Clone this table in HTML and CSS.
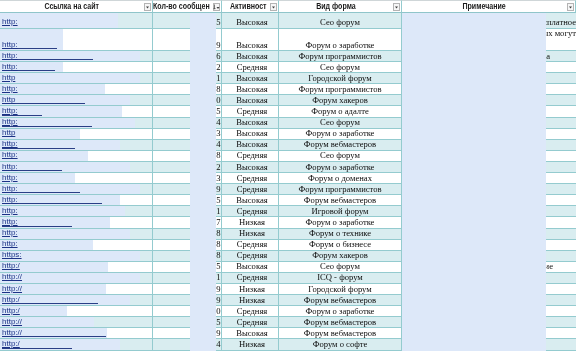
FILE: index.html
```html
<!DOCTYPE html>
<html lang="ru">
<head>
<meta charset="utf-8">
<title>Форумы</title>
<link rel="stylesheet" href="styles.css">
</head>
<body>
<div class="sheet">
  <div class="row head">
    <div class="cell h ha"><span class="ht"><span class="hx">Ссылка на сайт</span></span><span class="dd"><svg viewBox="0 0 7 8" width="7" height="8"><path d="M2 3.5h3L3.5 5.5z" fill="#404040"/></svg></span></div>
    <div class="cell h hb"><span class="ht"><span class="hx">Кол-во сообщен</span></span><span class="dd"><svg viewBox="0 0 7 8" width="7" height="8"><path d="M1.5 1.5v4.5M0.6 5l0.9 1.2 0.9-1.2" stroke="#404040" stroke-width="0.7" fill="none"/><path d="M3.5 4h3L5 6z" fill="#404040"/></svg></span></div>
    <div class="cell h hc"><span class="ht"><span class="hx">Активност</span></span><span class="dd"><svg viewBox="0 0 7 8" width="7" height="8"><path d="M2 3.5h3L3.5 5.5z" fill="#404040"/></svg></span></div>
    <div class="cell h hd"><span class="ht"><span class="hx">Вид форма</span></span><span class="dd"><svg viewBox="0 0 7 8" width="7" height="8"><path d="M2 3.5h3L3.5 5.5z" fill="#404040"/></svg></span></div>
    <div class="cell h he"><span class="ht"><span class="hx">Примечание</span></span><span class="dd"><svg viewBox="0 0 7 8" width="7" height="8"><path d="M2 3.5h3L3.5 5.5z" fill="#404040"/></svg></span></div>
  </div>

  <div class="row odd r1">
    <div class="cell a"><span class="mask" style="width:118px"></span><a class="link">http:</a></div>
    <div class="cell b">165</div><div class="cell c">Высокая</div><div class="cell d">Сео форум</div>
    <div class="cell e"><span class="note">Бесплатное</span></div>
  </div>
  <div class="row r2">
    <div class="cell a"><span class="mask" style="width:63px"></span><span class="uline" style="width:55px"></span><a class="link">http:</a></div>
    <div class="cell b">199</div><div class="cell c">Высокая</div><div class="cell d">Форум о заработке</div>
    <div class="cell e two"><span class="note">которых могут</span><span class="note2">быть</span></div>
  </div>
  <div class="row odd">
    <div class="cell a"><span class="mask" style="width:140px"></span><span class="uline" style="width:91px"></span><a class="link">http:</a></div>
    <div class="cell b">86</div><div class="cell c">Высокая</div><div class="cell d">Форум программистов</div>
    <div class="cell e"><span class="note pr26">реклама</span></div>
  </div>
  <div class="row">
    <div class="cell a"><span class="mask" style="width:63px"></span><span class="uline" style="width:53px"></span><a class="link">http:</a></div>
    <div class="cell b">72</div><div class="cell c">Средняя</div><div class="cell d">Сео форум</div><div class="cell e"></div>
  </div>
  <div class="row odd">
    <div class="cell a"><span class="mask" style="width:140px"></span><a class="link">http</a></div>
    <div class="cell b">91</div><div class="cell c">Высокая</div><div class="cell d">Городской форум</div><div class="cell e"></div>
  </div>
  <div class="row">
    <div class="cell a"><span class="mask" style="width:105px"></span><a class="link">http:</a></div>
    <div class="cell b">58</div><div class="cell c">Высокая</div><div class="cell d">Форум программистов</div><div class="cell e"></div>
  </div>
  <div class="row odd">
    <div class="cell a"><span class="mask" style="width:130px"></span><span class="uline" style="width:83px"></span><a class="link">http</a></div>
    <div class="cell b">30</div><div class="cell c">Высокая</div><div class="cell d">Форум хакеров</div><div class="cell e"></div>
  </div>
  <div class="row">
    <div class="cell a"><span class="mask" style="width:122px"></span><span class="uline" style="width:40px"></span><a class="link">http:</a></div>
    <div class="cell b">45</div><div class="cell c">Средняя</div><div class="cell d">Форум о адалте</div><div class="cell e"></div>
  </div>
  <div class="row odd">
    <div class="cell a"><span class="mask" style="width:135px"></span><span class="uline" style="width:90px"></span><a class="link">http:</a></div>
    <div class="cell b">64</div><div class="cell c">Высокая</div><div class="cell d">Сео форум</div><div class="cell e"></div>
  </div>
  <div class="row">
    <div class="cell a"><span class="mask" style="width:80px"></span><a class="link">http</a></div>
    <div class="cell b">23</div><div class="cell c">Высокая</div><div class="cell d">Форум о заработке</div><div class="cell e"></div>
  </div>
  <div class="row odd">
    <div class="cell a"><span class="mask" style="width:120px"></span><span class="uline" style="width:73px"></span><a class="link">http:</a></div>
    <div class="cell b">34</div><div class="cell c">Высокая</div><div class="cell d">Форум вебмастеров</div><div class="cell e"></div>
  </div>
  <div class="row">
    <div class="cell a"><span class="mask" style="width:88px"></span><a class="link">http:</a></div>
    <div class="cell b">98</div><div class="cell c">Средняя</div><div class="cell d">Сео форум</div><div class="cell e"></div>
  </div>
  <div class="row odd">
    <div class="cell a"><span class="mask" style="width:130px"></span><span class="uline" style="width:60px"></span><a class="link">http:</a></div>
    <div class="cell b">62</div><div class="cell c">Высокая</div><div class="cell d">Форум о заработке</div><div class="cell e"></div>
  </div>
  <div class="row">
    <div class="cell a"><span class="mask" style="width:75px"></span><a class="link">http:</a></div>
    <div class="cell b">53</div><div class="cell c">Средняя</div><div class="cell d">Форум о доменах</div><div class="cell e"></div>
  </div>
  <div class="row odd">
    <div class="cell a"><span class="mask" style="width:140px"></span><span class="uline" style="width:78px"></span><a class="link">http:</a></div>
    <div class="cell b">69</div><div class="cell c">Средняя</div><div class="cell d">Форум программистов</div><div class="cell e"></div>
  </div>
  <div class="row">
    <div class="cell a"><span class="mask" style="width:120px"></span><span class="uline" style="width:100px"></span><a class="link">http:</a></div>
    <div class="cell b">15</div><div class="cell c">Высокая</div><div class="cell d">Форум вебмастеров</div><div class="cell e"></div>
  </div>
  <div class="row odd">
    <div class="cell a"><span class="mask" style="width:125px"></span><a class="link">http:</a></div>
    <div class="cell b">21</div><div class="cell c">Средняя</div><div class="cell d">Игровой форум</div><div class="cell e"></div>
  </div>
  <div class="row">
    <div class="cell a"><span class="mask" style="width:110px"></span><span class="uline" style="width:70px"></span><a class="link">http:</a></div>
    <div class="cell b">87</div><div class="cell c">Низкая</div><div class="cell d">Форум о заработке</div><div class="cell e"></div>
  </div>
  <div class="row odd">
    <div class="cell a"><span class="mask" style="width:130px"></span><a class="link">http:</a></div>
    <div class="cell b">78</div><div class="cell c">Низкая</div><div class="cell d">Форум о технике</div><div class="cell e"></div>
  </div>
  <div class="row">
    <div class="cell a"><span class="mask" style="width:93px"></span><a class="link">http:</a></div>
    <div class="cell b">48</div><div class="cell c">Средняя</div><div class="cell d">Форум о бизнесе</div><div class="cell e"></div>
  </div>
  <div class="row odd">
    <div class="cell a"><span class="mask" style="width:140px"></span><a class="link">https:</a></div>
    <div class="cell b">28</div><div class="cell c">Средняя</div><div class="cell d">Форум хакеров</div><div class="cell e"></div>
  </div>
  <div class="row">
    <div class="cell a"><span class="mask" style="width:108px"></span><a class="link">http:/</a></div>
    <div class="cell b">85</div><div class="cell c">Высокая</div><div class="cell d">Сео форум</div>
    <div class="cell e"><span class="note pr23">обсуждение</span></div>
  </div>
  <div class="row odd">
    <div class="cell a"><span class="mask" style="width:140px"></span><a class="link">http://</a></div>
    <div class="cell b">71</div><div class="cell c">Средняя</div><div class="cell d">ICQ - форум</div><div class="cell e"></div>
  </div>
  <div class="row">
    <div class="cell a"><span class="mask" style="width:106px"></span><a class="link">http://</a></div>
    <div class="cell b">59</div><div class="cell c">Низкая</div><div class="cell d">Городской форум</div><div class="cell e"></div>
  </div>
  <div class="row odd">
    <div class="cell a"><span class="mask" style="width:130px"></span><span class="uline" style="width:96px"></span><a class="link">http:/</a></div>
    <div class="cell b">19</div><div class="cell c">Низкая</div><div class="cell d">Форум вебмастеров</div><div class="cell e"></div>
  </div>
  <div class="row">
    <div class="cell a"><span class="mask" style="width:67px"></span><a class="link">http:/</a></div>
    <div class="cell b">10</div><div class="cell c">Средняя</div><div class="cell d">Форум о заработке</div><div class="cell e"></div>
  </div>
  <div class="row odd">
    <div class="cell a"><span class="mask" style="width:94px"></span><a class="link">http://</a></div>
    <div class="cell b">75</div><div class="cell c">Средняя</div><div class="cell d">Форум вебмастеров</div><div class="cell e"></div>
  </div>
  <div class="row">
    <div class="cell a"><span class="mask" style="width:107px"></span><span class="uline" style="width:104px"></span><a class="link">http://</a></div>
    <div class="cell b">99</div><div class="cell c">Высокая</div><div class="cell d">Форум вебмастеров</div><div class="cell e"></div>
  </div>
  <div class="row odd">
    <div class="cell a"><span class="mask" style="width:120px"></span><span class="uline" style="width:70px"></span><a class="link">http:/</a></div>
    <div class="cell b">54</div><div class="cell c">Низкая</div><div class="cell d">Форум о софте</div><div class="cell e"></div>
  </div>

  <div class="cover cover-b"></div>
  <div class="cover cover-e"></div>
</div>
</body>
</html>
```

FILE: styles.css
```css
* { box-sizing: border-box; }

html, body {
  margin: 0;
  padding: 0;
  background: #ffffff;
  overflow: hidden;
}

.sheet {
  position: relative;
  width: 576px;
  display: flex;
  flex-direction: column;
  font-family: "Liberation Serif", "Times New Roman", serif;
  font-size: 8.6px;
  color: #0c0c0c;
  will-change: transform;
}

.row {
  display: grid;
  grid-template-columns: 153px 69px 57px 123px 174px;
  height: 11.1px;
  background: #ffffff;
}

.row.odd { background: #d9edf0; }
.row.r1 { height: 15.5px; }
.row.r2 { height: 22.5px; }

.cell {
  position: relative;
  display: flex;
  align-items: flex-end;
  justify-content: center;
  border-right: 1px solid #94cbcf;
  border-bottom: 1px solid #94cbcf;
  line-height: 10px;
  padding-bottom: 0.5px;
  overflow: hidden;
  white-space: nowrap;
}

.cell.a { justify-content: flex-start; padding-left: 2px; }
.cell.b { justify-content: flex-end; padding-right: 0.5px; }
.cell.c { padding-left: 4px; }
.cell.e { justify-content: flex-end; border-right: none; }

.row.head {
  height: 13px;
  background: #ffffff;
}

.cell.h {
  align-items: center;
  justify-content: center;
  padding: 0 1px 0 0;
  border-top: 1px solid #cfd6d8;
  border-bottom: 1px solid #8fc5ca;
  font-family: "Liberation Sans", Arial, sans-serif;
  font-weight: bold;
  font-size: 8.2px;
  color: #1a1a1a;
  line-height: 10px;
}

.ht {
  flex: 1;
  min-width: 0;
  display: flex;
  justify-content: center;
}

.hx {
  display: inline-block;
  transform: scaleX(0.86);
  transform-origin: center;
}

.hb .ht { justify-content: flex-start; }
.hb .hx { transform-origin: left center; }
.hc .ht { justify-content: flex-start; padding-left: 8px; }
.hc .hx { transform-origin: left center; }

.dd {
  flex: none;
  width: 7px;
  height: 8px;
  border: 1px solid #b4b4b4;
  background: #f6f6f6;
  display: flex;
  align-items: center;
  justify-content: center;
}

.dd svg { display: block; width: 7px; height: 8px; margin: -1px; }

.mask {
  position: absolute;
  left: 0;
  top: 0;
  bottom: -1px;
  background: #dde8f9;
}

.link {
  position: relative;
  font-family: "Liberation Sans", Arial, sans-serif;
  font-size: 8px;
  color: #1c3286;
  text-decoration: underline;
  line-height: 10px;
}

.uline {
  position: absolute;
  left: 2px;
  bottom: 1px;
  height: 1px;
  background: #2a3f86;
}

.note { display: block; }
.pr26 { padding-right: 26px; }
.pr23 { padding-right: 23px; }

.cell.e.two {
  flex-direction: column;
  align-items: stretch;
  justify-content: flex-end;
}

.two .note { text-align: right; padding-bottom: 2px; }
.two .note2 { text-align: left; padding-left: 4px; }

.cover {
  position: absolute;
  top: 13px;
  bottom: 0;
  background: #dde8f9;
}

.cover-b { left: 190px; width: 26px; }
.cover-e { left: 402px; width: 144px; }
```
